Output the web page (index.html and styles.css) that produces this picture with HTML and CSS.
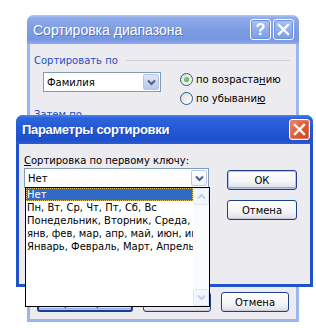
FILE: index.html
```html
<!DOCTYPE html>
<html lang="ru">
<head>
    <meta charset="UTF-8">
    <title>Параметры сортировки</title>
    <link rel="stylesheet" href="styles.css">
</head>
<body>
    <div class="desktop">
        <!-- Back dialog: Сортировка диапазона -->
        <div class="window back-window">
            <div class="titlebar inactive">
                <span class="title">Сортировка диапазона</span>
                <div class="title-buttons">
                    <span class="tbtn">?</span>
                    <span class="tbtn">
                        <svg width="13" height="13" viewBox="0 0 13 13"><path d="M2 2 L11 11 M11 2 L2 11" stroke="#fff" stroke-width="2.4" stroke-linecap="square"/></svg>
                    </span>
                </div>
            </div>
            <div class="client back-client">
                <div class="group-label">
                    <span>Сортировать по</span>
                    <span class="rule"></span>
                </div>
                <div class="sort-row">
                    <div class="combo combo-name">
                        <span class="combo-text">Фамилия</span>
                        <span class="combo-btn filled">
                            <svg width="9" height="7" viewBox="0 0 9 7"><path d="M1 1.5 L4.5 5 L8 1.5" fill="none" stroke="#4d6185" stroke-width="2"/></svg>
                        </span>
                    </div>
                    <div class="radios">
                        <div class="radio"><span class="dot checked"></span><span>по возраста<u>н</u>ию</span></div>
                        <div class="radio"><span class="dot"></span><span>по убывани<u>ю</u></span></div>
                    </div>
                </div>
                <div class="group-label then">Затем по</div>
                <div class="filler"></div>
                <div class="button-row">
                    <button class="btn wide default">Параметры...</button>
                    <button class="btn">ОК</button>
                    <button class="btn">Отмена</button>
                </div>
            </div>
        </div>

        <!-- Front dialog: Параметры сортировки -->
        <div class="window front-window">
            <div class="titlebar active">
                <span class="title">Параметры сортировки</span>
                <div class="title-buttons">
                    <span class="tbtn close">
                        <svg width="13" height="13" viewBox="0 0 13 13"><path d="M2 2 L11 11 M11 2 L2 11" stroke="#fff" stroke-width="2.4" stroke-linecap="square"/></svg>
                    </span>
                </div>
            </div>
            <div class="client front-client">
                <div class="key-column">
                    <div class="key-label"><u>С</u>ортировка по первому ключу:</div>
                    <div class="combo combo-key">
                        <span class="combo-text">Нет</span>
                        <span class="combo-btn pale">
                            <svg width="9" height="7" viewBox="0 0 9 7"><path d="M1 1.5 L4.5 5 L8 1.5" fill="none" stroke="#4d6185" stroke-width="2"/></svg>
                        </span>
                        <div class="dropdown">
                            <ul class="options">
                                <li class="selected">Нет</li>
                                <li>Пн, Вт, Ср, Чт, Пт, Сб, Вс</li>
                                <li>Понедельник, Вторник, Среда, Четверг, Пятница, Суббота, Воскресенье</li>
                                <li>янв, фев, мар, апр, май, июн, июл, авг, сен, окт, ноя, дек</li>
                                <li>Январь, Февраль, Март, Апрель, Май, Июнь, Июль, Август</li>
                            </ul>
                            <div class="scrollbar">
                                <span class="arrow">
                                    <svg width="9" height="7" viewBox="0 0 9 7"><path d="M1 5.5 L4.5 2 L8 5.5" fill="none" stroke="#c4d0e8" stroke-width="2"/></svg>
                                </span>
                                <span class="arrow">
                                    <svg width="9" height="7" viewBox="0 0 9 7"><path d="M1 1.5 L4.5 5 L8 1.5" fill="none" stroke="#c4d0e8" stroke-width="2"/></svg>
                                </span>
                            </div>
                        </div>
                    </div>
                </div>
                <div class="action-column">
                    <button class="btn default">ОК</button>
                    <button class="btn">Отмена</button>
                </div>
            </div>
        </div>
    </div>
</body>
</html>
```

FILE: styles.css
```css
body {
    margin: 0;
    background: #fff;
    font-family: "DejaVu Sans", sans-serif;
    font-size: 10px;
    color: #000;
}
.desktop {
    position: relative;
    width: 316px;
    height: 328px;
    overflow: hidden;
}
.window {
    position: absolute;
    display: flex;
    flex-direction: column;
    border-radius: 7px 7px 0 0;
    box-sizing: border-box;
}
.back-window {
    left: 27px;
    top: 15px;
    width: 272px;
    height: 307px;
    background: #9ab6ee;
}
.front-window {
    left: 16px;
    top: 115px;
    width: 297px;
    height: 172px;
    background: #1f52cc;
}

/* title bars */
.titlebar {
    height: 29px;
    flex: none;
    display: flex;
    align-items: center;
    justify-content: space-between;
    padding: 0 5px 0 6px;
    border-radius: 7px 7px 0 0;
    color: #fff;
}
.titlebar.inactive {
    background: linear-gradient(#b2c8f4 0, #8eaaea 3px, #7d9ce4 50%, #7897e2 85%, #8eaaea 100%);
    padding-right: 5px;
}
.titlebar.active {
    background: linear-gradient(#4c86ee 0, #2d64dc 3px, #2458d4 50%, #1f50cc 85%, #2a5cd4 100%);
    padding-right: 3px;
}
.title {
    font-family: "Liberation Sans", sans-serif;
    font-size: 13px;
    font-weight: bold;
    letter-spacing: -0.3px;
    text-shadow: 1px 1px 0 rgba(10, 30, 100, 0.35);
}
.inactive .title {
    font-weight: normal;
    font-size: 14px;
    letter-spacing: 0;
}
.title-buttons {
    display: flex;
    gap: 2px;
}
.tbtn {
    width: 19px;
    height: 19px;
    border: 1px solid #fff;
    border-radius: 3px;
    display: flex;
    align-items: center;
    justify-content: center;
    font-family: "Liberation Sans", sans-serif;
    font-weight: bold;
    font-size: 16px;
    background: linear-gradient(#a8c2f2, #7b9ce6);
    box-shadow: inset 0 0 0 1px #6c8fdc;
}
.tbtn.close {
    background: linear-gradient(135deg, #f08b68, #dd5a34 55%, #c8441e);
    box-shadow: inset 0 0 0 1px #e77a55;
}

/* client areas */
.client {
    flex: 1;
    background: #ecebf0;
    margin: 0 3px 3px;
    display: flex;
}
.back-client {
    flex-direction: column;
    padding: 10px 4px 7px;
}
.front-client {
    padding: 11px 4px 0 5px;
    gap: 18px;
}

/* group labels */
.group-label {
    display: flex;
    align-items: center;
    gap: 8px;
    color: #1f4fc3;
    height: 13px;
}
.group-label .rule {
    flex: 1;
    height: 1px;
    background: #d0d0d8;
    margin-right: 2px;
}
.group-label.then {
    margin-top: 3px;
}
.sort-row {
    display: flex;
    gap: 19px;
    margin: 5px 0 0 9px;
}
.radios {
    display: flex;
    flex-direction: column;
    gap: 6px;
    margin-top: 1px;
}
.radio {
    display: flex;
    align-items: center;
    gap: 3px;
    height: 13px;
}
.dot {
    width: 11px;
    height: 11px;
    border: 1px solid #2c5c8c;
    border-radius: 50%;
    background: linear-gradient(135deg, #dcdcd6, #fff);
    display: flex;
    align-items: center;
    justify-content: center;
}
.dot.checked::after {
    content: "";
    width: 5px;
    height: 5px;
    border-radius: 50%;
    background: radial-gradient(circle at 40% 40%, #7ee07e, #21a121);
}
.filler {
    flex: 1;
}

/* combo boxes */
.combo {
    position: relative;
    display: flex;
    align-items: center;
    justify-content: space-between;
    background: #fff;
    border: 1px solid #7f9db9;
    box-sizing: border-box;
    height: 20px;
    padding: 1px;
}
.combo-text {
    padding-left: 2px;
}
.combo-name {
    width: 118px;
}
.combo-key {
    width: 185px;
}
.combo-btn {
    width: 16px;
    height: 16px;
    box-sizing: border-box;
    border-radius: 2px;
    display: flex;
    align-items: center;
    justify-content: center;
}
.combo-btn.filled {
    background: linear-gradient(#dfe6f6, #b9c9ee);
    border: 1px solid #b4c4e8;
}
.combo-btn.pale {
    background: linear-gradient(#fff, #edf2fc);
    border: 1px solid #b8c8ea;
}
.key-column {
    display: flex;
    flex-direction: column;
}
.key-label {
    height: 13px;
}

/* open dropdown list */
.dropdown {
    position: absolute;
    left: 0;
    top: 18px;
    width: 185px;
    height: 120px;
    box-sizing: border-box;
    border: 1px solid #000;
    background: #fff;
    display: flex;
    z-index: 2;
}
.options {
    list-style: none;
    margin: 0;
    padding: 0;
    flex: 1;
    min-width: 0;
    overflow: hidden;
}
.options li {
    height: 13px;
    line-height: 13px;
    padding-left: 1px;
    white-space: nowrap;
    overflow: hidden;
    text-overflow: clip;
}
.options li.selected {
    background: #316ac5;
    color: #fff;
    outline: 1px dotted #e0c060;
    outline-offset: -1px;
}
.scrollbar {
    width: 16px;
    flex: none;
    display: flex;
    flex-direction: column;
    justify-content: space-between;
    background: #fbfcfe;
}
.arrow {
    height: 17px;
    box-sizing: border-box;
    border: 1px solid #e0e8f8;
    border-radius: 2px;
    background: #f2f6fd;
    display: flex;
    align-items: center;
    justify-content: center;
}

/* buttons */
.btn {
    font: inherit;
    color: #000;
    height: 20px;
    width: 68px;
    padding: 0;
    border: 1px solid #1f3f86;
    border-radius: 3px;
    background: linear-gradient(#ffffff, #f4f4f6 60%, #dcdde6);
    box-shadow: inset 0 -1px 0 #c8cad8;
}
.btn.default {
    box-shadow: inset 0 0 0 1px #b2c6f0, inset 0 -2px 0 #8cacea;
}
.btn.wide {
    width: 96px;
    border: 2px solid #1c3c98;
}
.button-row {
    display: flex;
    gap: 10px;
    padding-left: 3px;
}
.action-column {
    display: flex;
    flex-direction: column;
    gap: 10px;
    padding-top: 15px;
}
.action-column .btn {
    width: 70px;
}
```
